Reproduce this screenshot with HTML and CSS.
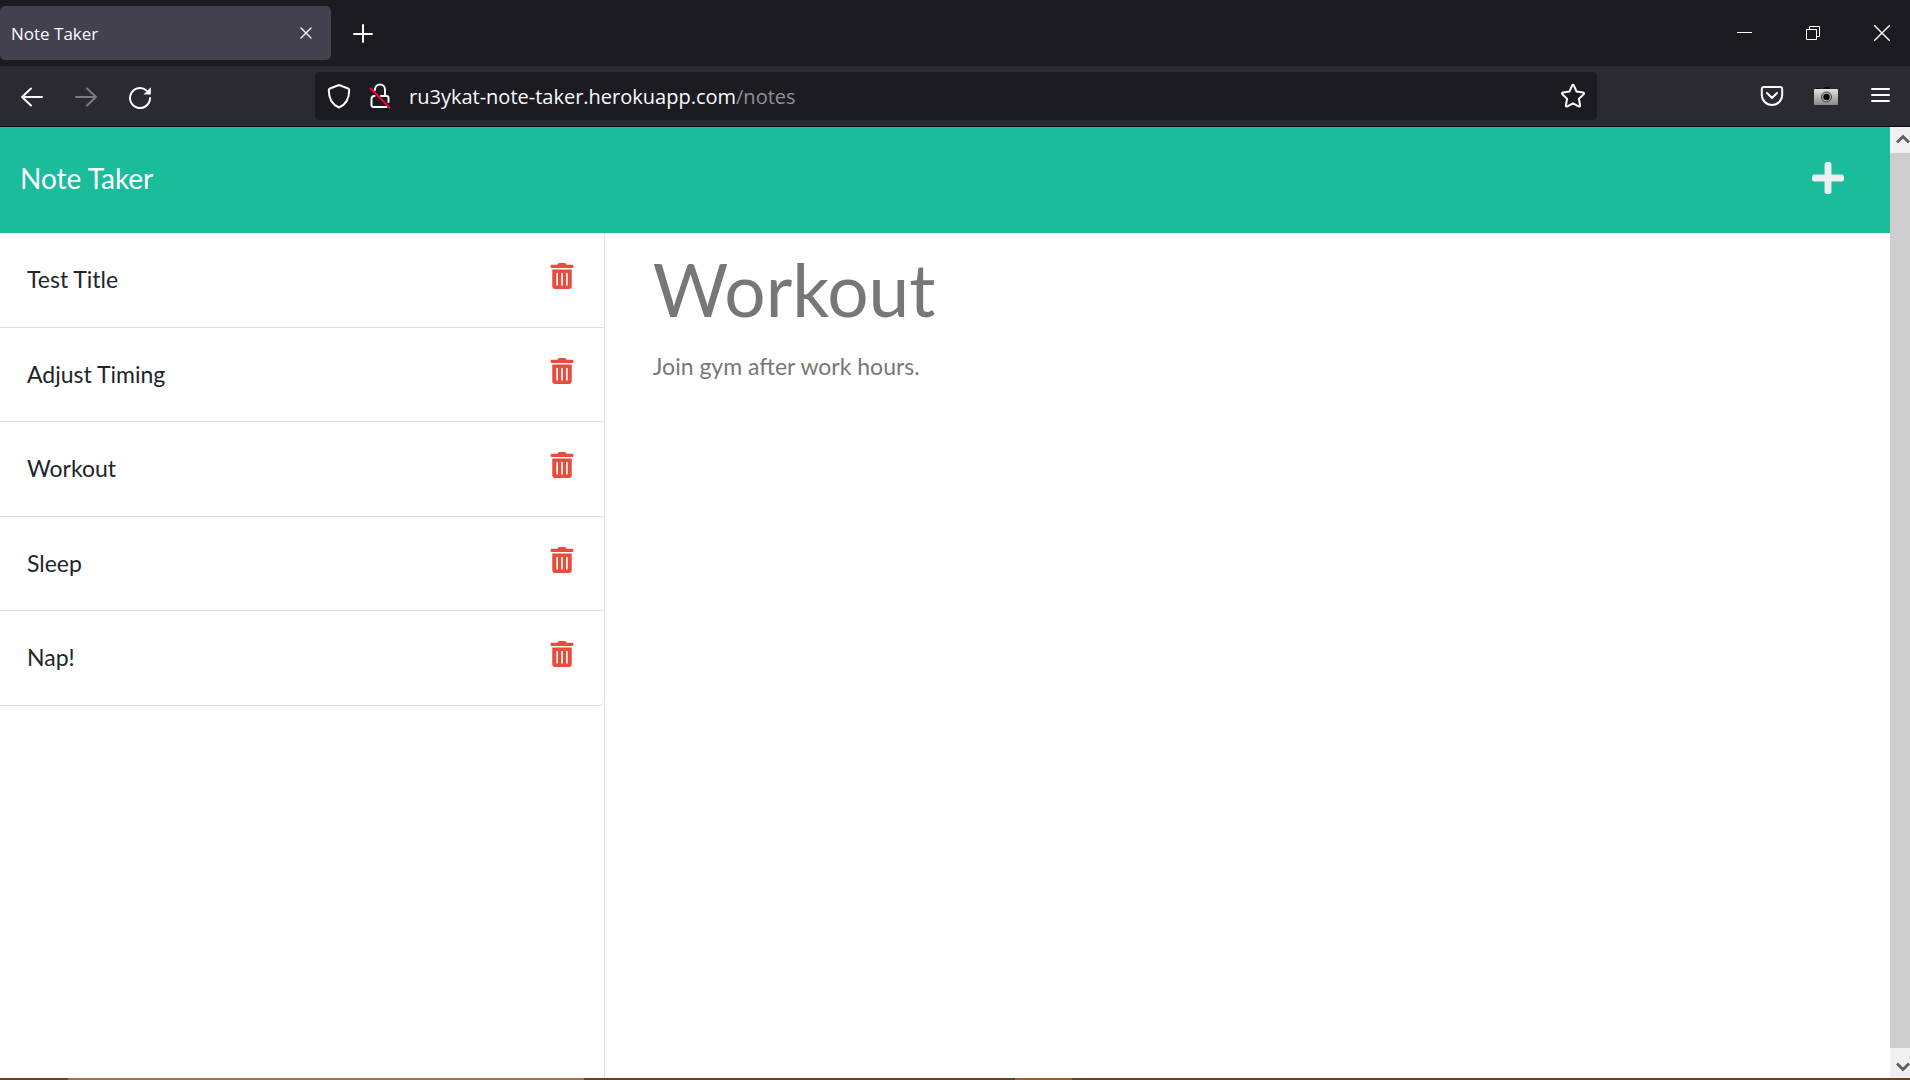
FILE: index.html
```html
<!DOCTYPE html>
<html lang="en">
<head>
<meta charset="utf-8">
<meta name="viewport" content="width=device-width, initial-scale=1">
<title>Note Taker</title>
<link rel="stylesheet" href="styles.css">
</head>
<body>
<svg class="defs" aria-hidden="true">
  <symbol id="trash" viewBox="0 0 448 512"><path d="M32 464a48 48 0 0 0 48 48h288a48 48 0 0 0 48-48V128H32zm272-256a16 16 0 0 1 32 0v224a16 16 0 0 1-32 0zm-96 0a16 16 0 0 1 32 0v224a16 16 0 0 1-32 0zm-96 0a16 16 0 0 1 32 0v224a16 16 0 0 1-32 0zM432 32H312l-9.4-18.7A24 24 0 0 0 281.1 0H166.8a23.72 23.72 0 0 0-21.4 13.3L136 32H16A16 16 0 0 0 0 48v32a16 16 0 0 0 16 16h416a16 16 0 0 0 16-16V48a16 16 0 0 0-16-16z"/></symbol>
</svg>

<div class="tabbar">
  <div class="tab">
    <span class="tab-title">Note Taker</span>
    <button class="icon-btn" aria-label="Close tab"><svg width="14" height="14" viewBox="0 0 14 14"><path class="line" d="M2 2l10 10M12 2L2 12"/></svg></button>
  </div>
  <button class="icon-btn new-tab" aria-label="New tab"><svg width="20" height="20" viewBox="0 0 20 20"><path class="line thick" d="M10 2v17M1 11h18"/></svg></button>
  <div class="window-controls">
    <button class="icon-btn" aria-label="Minimize"><svg width="16" height="16" viewBox="0 0 16 16"><path d="M1 7h15v1H1z"/></svg></button>
    <button class="icon-btn" aria-label="Restore"><svg width="16" height="16" viewBox="0 0 16 16"><path class="thin" d="M1.500 4.500h10v10h-10zM4.500 4.500v-3h10v10h-3"/></svg></button>
    <button class="icon-btn" aria-label="Close window"><svg width="16" height="16" viewBox="0 0 16 16"><path class="line" d="M0 0l16 16M16 0L0 16"/></svg></button>
  </div>
</div>

<div class="toolbar">
  <div class="nav-buttons">
    <button class="icon-btn" aria-label="Back"><svg width="24" height="24" viewBox="0 0 24 24"><path class="line thick" d="M22 12H2M11 3.500L2 12l9 8.500"/></svg></button>
    <button class="icon-btn" aria-label="Forward" disabled><svg width="24" height="24" viewBox="0 0 24 24"><path class="line thick" d="M2 12h20M13 3.500l9 8.500-9 8.500"/></svg></button>
    <button class="icon-btn" aria-label="Reload"><svg width="24" height="24" viewBox="0 0 24 24"><path class="line thick" d="M22 13a10 10 0 1 1-3.500-7.600"/><path d="M22.800 2.200v7.300h-7.300z"/></svg></button>
  </div>
  <div class="urlbar">
    <button class="icon-btn" aria-label="Tracking protection"><svg width="24" height="26" viewBox="0 0 24 26"><path class="line thick" d="M12 2l9 3.500q1.200.5 1.200 1.700C22.200 15 19 21.500 12 24.500 5 21.500 1.800 15 1.800 7.200q0-1.200 1.200-1.700z"/></svg></button>
    <button class="icon-btn" aria-label="Connection not secure"><svg width="22" height="26" viewBox="0 0 22 26"><path class="line thick" d="M6 7V6.500a5 5 0 0 1 10 0V13M12 13h5.500q2 0 2 2v4M5.500 13q-3 0-3 2.500v6.500q0 2 2 2h13"/><path class="slash" d="M1 5l20 20"/></svg></button>
    <div class="url" role="textbox" contenteditable="true" spellcheck="false" aria-label="Address">ru3ykat-note-taker.herokuapp.com<span class="url-path">/notes</span></div>
    <button class="icon-btn" aria-label="Bookmark"><svg width="26" height="26" viewBox="0 0 26 26"><path class="line thick" d="M12.100 2.600q.9-1.500 1.800 0l2.700 6 6.400.9q1.700.4.6 1.800l-4.700 4.600 1.200 6.400q.1 1.800-1.500 1.100L13 20.300l-5.600 3.100q-1.600.7-1.500-1.100l1.200-6.400-4.700-4.600q-1.100-1.400.6-1.800l6.400-.9z"/></svg></button>
  </div>
  <div class="tools">
    <button class="icon-btn" aria-label="Save to Pocket"><svg width="24" height="24" viewBox="0 0 24 24"><path class="line thick" d="M4 3h16q2.200 0 2.200 2.200V11a10.200 10 0 0 1-20.400 0V5.200Q1.800 3 4 3zM7 9l5 5 5-5"/></svg></button>
    <button class="icon-btn" aria-label="Take screenshot"><svg width="24" height="24" viewBox="0 0 24 24"><defs><linearGradient id="metal" x1="0" y1="0" x2="0" y2="1"><stop offset="0" stop-color="#e2e2e2"/><stop offset="1" stop-color="#8a8a8a"/></linearGradient></defs><path d="M2 6V4h4v2M9 6l1-3h5l1 3" fill="#08080a"/><rect y="5" width="24" height="16" rx="1" fill="url(#metal)"/><circle cx="12.500" cy="13" r="5" fill="#aaa" stroke="#444" stroke-width="1"/><circle cx="12.500" cy="13" r="3.200" fill="#000"/></svg></button>
    <button class="icon-btn" aria-label="Menu"><svg width="22" height="20" viewBox="0 0 22 20"><path class="line thick" d="M4 3h17M4 9h17M4 15h17"/></svg></button>
  </div>
</div>

<div class="viewport">
  <div class="page">
    <header class="navbar">
      <a class="brand" href="#">Note Taker</a>
      <button class="icon-btn add-note" aria-label="New note"><svg width="32" height="32" viewBox="0 32 448 448"><path d="M416 208H272V64c0-17.670-14.330-32-32-32h-32c-17.670 0-32 14.330-32 32v144H32c-17.670 0-32 14.330-32 32v32c0 17.670 14.330 32 32 32h144v144c0 17.670 14.330 32 32 32h32c17.670 0 32-14.330 32-32V304h144c17.670 0 32-14.330 32-32v-32c0-17.670-14.330-32-32-32z"/></svg></button>
    </header>
    <main class="content">
      <ul class="notes">
        <li class="note"><span>Test Title</span><button class="icon-btn delete" aria-label="Delete Test Title"><svg width="24" height="26"><use href="#trash"/></svg></button></li>
        <li class="note"><span>Adjust Timing</span><button class="icon-btn delete" aria-label="Delete Adjust Timing"><svg width="24" height="26"><use href="#trash"/></svg></button></li>
        <li class="note"><span>Workout</span><button class="icon-btn delete" aria-label="Delete Workout"><svg width="24" height="26"><use href="#trash"/></svg></button></li>
        <li class="note"><span>Sleep</span><button class="icon-btn delete" aria-label="Delete Sleep"><svg width="24" height="26"><use href="#trash"/></svg></button></li>
        <li class="note"><span>Nap!</span><button class="icon-btn delete" aria-label="Delete Nap!"><svg width="24" height="26"><use href="#trash"/></svg></button></li>
      </ul>
      <div class="editor">
        <input class="note-title" aria-label="Note title" value="Workout" readonly>
        <textarea class="note-text" aria-label="Note text" readonly>Join gym after work hours.</textarea>
      </div>
    </main>
  </div>
  <div class="scrollbar">
    <button class="icon-btn scroll-btn" aria-label="Scroll up"><svg width="14" height="12" viewBox="0 0 14 12"><path class="chevron" d="M1 8.500l6-6 6 6"/></svg></button>
    <div class="thumb"></div>
    <button class="icon-btn scroll-btn down" aria-label="Scroll down"><svg width="14" height="12" viewBox="0 0 14 12"><path class="chevron" d="M1 2.500l6 6 6-6"/></svg></button>
  </div>
</div>
<div class="taskbar"></div>
</body>
</html>
```
FILE: styles.css
```css
* {
  box-sizing: border-box;
}

body {
  margin: 0;
  min-height: 100vh;
  display: flex;
  flex-direction: column;
  background: #fff;
  font-family: Lato, sans-serif;
}

.defs {
  display: none;
}

.icon-btn {
  display: flex;
  align-items: center;
  justify-content: center;
  flex: none;
  padding: 0;
  border: 0;
  background: none;
  color: #fbfbfe;
}

.icon-btn:disabled {
  color: #7c7b82;
}

svg {
  display: block;
  fill: currentColor;
}

.line,
.thin {
  fill: none;
  stroke: currentColor;
  stroke-width: 1.4;
  stroke-linecap: round;
  stroke-linejoin: round;
}

.thin {
  stroke-width: 1;
  stroke-linecap: butt;
  stroke-linejoin: miter;
}

.thick {
  stroke-width: 2;
}

.slash {
  stroke: #ff0039;
  stroke-width: 2;
}

/* Browser window */
.tabbar {
  display: flex;
  align-items: center;
  height: 66px;
  background: #1c1b22;
  font-family: "Open Sans", sans-serif;
}

.tab {
  display: flex;
  align-items: center;
  justify-content: space-between;
  width: 331px;
  height: 54px;
  padding: 0 18px 0 11px;
  border-radius: 5px;
  background: #42414d;
  color: #fbfbfe;
  font-size: 17px;
}

.new-tab {
  margin-left: 22px;
}

.window-controls {
  display: flex;
  gap: 53px;
  margin-left: auto;
  padding-right: 20px;
}

.toolbar {
  display: flex;
  align-items: center;
  height: 61px;
  border-bottom: 1px solid #0c0c0d;
  background: #2b2a33;
}

.nav-buttons {
  display: flex;
  gap: 30px;
  width: 315px;
  padding: 2px 0 0 20px;
}

.urlbar {
  display: flex;
  align-items: center;
  flex: 1;
  gap: 18px;
  height: 48px;
  padding: 0 11px 0 12px;
  border-radius: 5px;
  background: #1c1b22;
}

.url {
  flex: 1;
  padding-top: 2px;
  color: #fbfbfe;
  font-family: "Open Sans", sans-serif;
  font-size: 20px;
  line-height: 28px;
}

.url-path {
  color: #8f8f96;
}

.tools {
  display: flex;
  align-items: center;
  justify-content: flex-end;
  gap: 30px;
  width: 313px;
  padding-right: 20px;
}

.viewport {
  display: flex;
  flex: 1;
}

.page {
  display: flex;
  flex-direction: column;
  flex: 1;
}

.scrollbar {
  display: flex;
  flex-direction: column;
  width: 20px;
  background: #f0f0f0;
}

.scroll-btn {
  height: 26px;
  padding-left: 6px;
  color: #606060;
}

.scroll-btn.down {
  height: 30px;
  padding-top: 8px;
}

.chevron {
  fill: none;
  stroke: currentColor;
  stroke-width: 3;
}

.thumb {
  flex: 1;
  background: #cdcdcd;
}

.taskbar {
  height: 2px;
  background: linear-gradient(90deg, #5f4529 68px, #92755b 68px 584px, #5f4529 584px 1015px, #9a622c 1015px 1072px, #5f4529 1072px);
}

/* Note Taker app */
.navbar {
  display: flex;
  align-items: center;
  justify-content: space-between;
  height: 106px;
  padding: 0 46px 4px 20px;
  background: #1abc9c;
}

.brand {
  color: #fff;
  font-size: 28px;
  line-height: 48px;
  text-decoration: none;
}

.add-note {
  color: #ecf0f1;
}

.content {
  display: flex;
  flex: 1;
}

.notes {
  width: 32%;
  margin: 0;
  padding: 0;
  border-right: 1px solid #dfdfdf;
  list-style: none;
}

.note {
  display: flex;
  align-items: flex-start;
  justify-content: space-between;
  padding: 29px 30px 30px 27px;
  border-bottom: 1px solid #dfdfdf;
  color: #212529;
  font-size: 23px;
  line-height: 1.5;
}

.note:last-child {
  border-bottom-right-radius: 6px;
}

.delete {
  height: 28px;
  color: #e74c3c;
}

.editor {
  display: flex;
  flex-direction: column;
  flex: 1;
  gap: 11px;
  padding: 8px 48px;
}

.note-title,
.note-text {
  width: 100%;
  padding: 0;
  border: 0;
  outline: 0;
  background: none;
  color: #777;
  font-family: inherit;
}

.note-title {
  height: 96px;
  font-size: 73px;
}

.note-text {
  flex: 1;
  resize: none;
  font-size: 23px;
  line-height: 36px;
}
```
